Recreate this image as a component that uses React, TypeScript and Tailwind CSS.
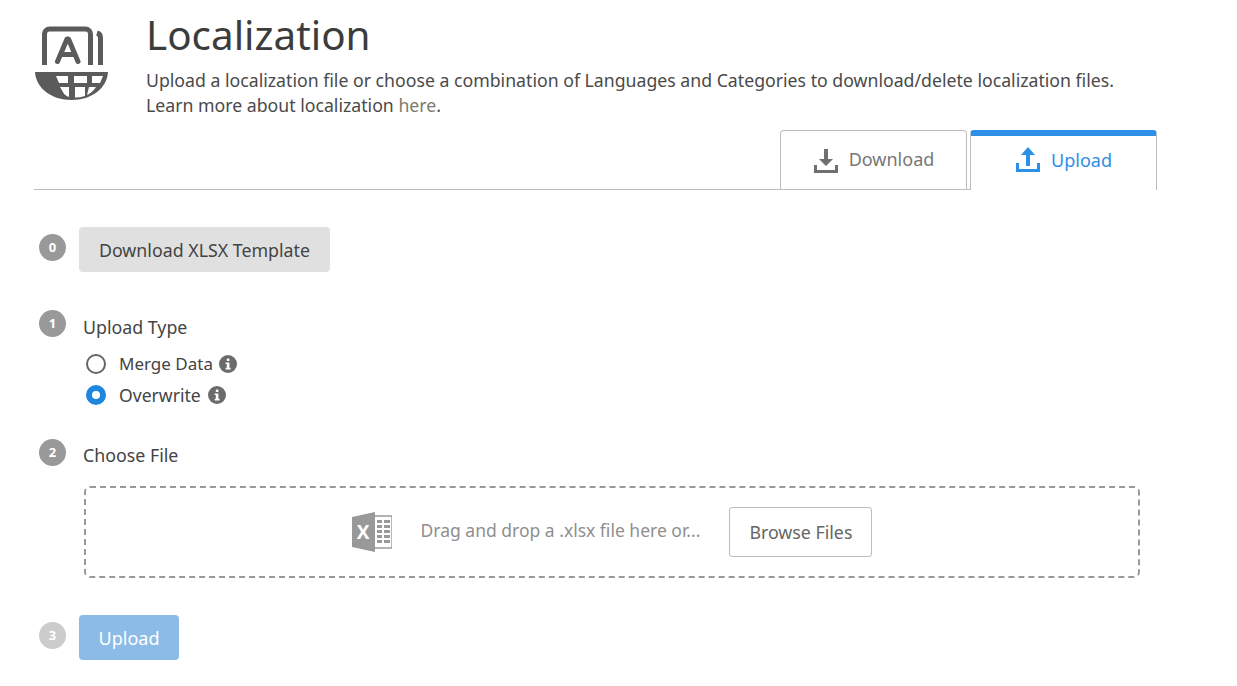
import React from 'react';

const StepBadge: React.FC<{ n: number; light?: boolean; className?: string }> = ({ n, light, className }) => (
  <div className={`flex h-[27px] w-[27px] shrink-0 items-center justify-center rounded-full text-[13px] font-bold text-white ${light ? 'bg-[#cccccc]' : 'bg-[#999999]'} ${className ?? ''}`}>
    {n}
  </div>
);

const InfoDot = () => (
  <svg viewBox="0 0 18 18" className="h-[18px] w-[18px]">
    <circle cx="9" cy="9" r="9" fill="#6b6b6b" />
    <rect x="7.8" y="3.4" width="2.6" height="2.6" rx="0.6" fill="#fff" />
    <path d="M6.6 7.4h3.8v5.4h1.2v1.6H6.6v-1.6h1.2V9H6.6z" fill="#fff" />
  </svg>
);

const LocalizationIcon = () => (
  <svg viewBox="0 0 76 80" className="h-[80px] w-[76px]">
    <g fill="none" stroke="#5b5b5b" strokeWidth="5">
      <path d="M10.500 43V12a5 5 0 0 1 5-5h36a5 5 0 0 1 5 5v31" />
      <path d="M63 11a5 5 0 0 1 3.500 5v27" />
      <path d="M23.500 39.500L33 17h1.500L44 39.500M27.500 32.500h13" strokeLinecap="round" strokeLinejoin="round" />
    </g>
    <path d="M1 50h73c-1 16-16 28-36.500 28S2 66 1 50z" fill="#5b5b5b" />
    <path d="M22 54h12v7H25zM40 54h13v7H40zM58 54h11l-3 7h-8zM26 65h9v10q-5-2-6-5zM41 65h10v9q-5 1.500-10 1.500zM55 65h7q-3 5-9 8z" fill="#fff" />
  </svg>
);

const DownloadGlyph = () => (
  <svg viewBox="0 0 26 26" className="mt-[3px] h-[26px] w-[26px]">
    <path d="M11 1h4v10h5l-7 7-7-7h5z" fill="#6f6f6f" />
    <path d="M1 17h3v5h18v-5h3v8H1z" fill="#6f6f6f" />
  </svg>
);

const UploadGlyph = () => (
  <svg viewBox="0 0 26 26" className="-mt-[1px] h-[26px] w-[26px]">
    <path d="M13 0l7 8h-5v11h-4V8H6z" fill="#2b90e6" />
    <path d="M1 16h3v6h18v-6h3v9H1z" fill="#2b90e6" />
  </svg>
);

const ExcelGlyph = () => (
  <svg viewBox="0 0 40 40" className="h-[40px] w-[40px]">
    <path d="M0 5L23 0v40L0 35z" fill="#999" />
    <text x="11" y="27" textAnchor="middle" fontSize="19" fontWeight="700" fill="#fff" fontFamily="Open Sans, sans-serif">X</text>
    <path d="M23 4h17v32H23" fill="none" stroke="#999" strokeWidth="1.4" />
    <path d="M25 8h5v3h-5zM32 8h6v3h-6zM25 13h5v3h-5zM32 13h6v3h-6zM25 18h5v3h-5zM32 18h6v3h-6zM25 23h5v3h-5zM32 23h6v3h-6zM25 28h5v3h-5zM32 28h6v3h-6z" fill="#999" />
  </svg>
);

const App: React.FC = () => {
  return (
    <div className="h-[686px] w-[1237px] overflow-hidden bg-white font-['Noto_Sans','Open_Sans',sans-serif] text-[#444444]">
      {/* header */}
      <div className="ml-[34px] flex h-[130px] items-start">
        <div className="pt-[22px]">
          <LocalizationIcon />
        </div>
        <div className="ml-[36px]">
          <h1 className="mt-[9px] text-[40.4px] leading-[52px] text-[#3c3c3c]">Localization</h1>
          <p className="mt-[7px] text-[17.7px] leading-[25px] text-[#4a4a4a]">
            Upload a localization file or choose a combination of Languages and Categories to download/delete localization files.
            <br />
            Learn more about localization <a className="text-[#7b7b6b]">here</a>.
          </p>
        </div>
      </div>

      {/* tabs */}
      <div className="ml-[34px] flex h-[60px] w-[1123px] items-stretch justify-end gap-[3px] border-b border-[#bdbdbd]">
        <div className="flex w-[187px] items-center justify-center gap-[10px] rounded-t-[4px] border border-b-0 border-[#bdbdbd] pb-[1px] text-[18px] text-[#777777]">
          <DownloadGlyph />
          Download
        </div>
        <div className="-mb-px flex w-[187px] items-center justify-center gap-[10px] rounded-t-[4px] border-x border-t-[6px] border-x-[#bdbdbd] border-t-[#2b90e6] bg-white pb-[5px] text-[18px] text-[#2b90e6]">
          <UploadGlyph />
          Upload
        </div>
      </div>

      <div className="ml-[39px] pt-[37px]">
        {/* step 0 */}
        <div className="flex items-start gap-[13px]">
          <StepBadge n={0} className="mt-[7px]" />
          <button className="h-[45px] w-[251px] rounded-[4px] bg-[#e0e0e0] pt-[2px] text-[17.8px] text-[#444444]">Download XLSX Template</button>
        </div>

        {/* step 1 */}
        <div className="mt-[38px] flex items-start gap-[17px]">
          <StepBadge n={1} />
          <span className="mt-[4px] text-[17.8px] leading-[27px]">Upload Type</span>
        </div>
        <div className="ml-[47px] mt-[12px] flex flex-col gap-[9px]">
          <label className="flex h-[22px] items-center gap-[13px] text-[17px]">
            <span className="h-[20px] w-[20px] rounded-full border-2 border-[#666666]" />
            Merge Data
            <span className="-ml-[7px]"><InfoDot /></span>
          </label>
          <label className="flex h-[22px] items-center gap-[13px] text-[17.6px]">
            <span className="flex h-[20px] w-[20px] items-center justify-center rounded-full bg-[#1f86e0]">
              <span className="h-[8px] w-[8px] rounded-full bg-white" />
            </span>
            Overwrite
            <span className="-ml-[6px]"><InfoDot /></span>
          </label>
        </div>

        {/* step 2 */}
        <div className="mt-[33px] flex items-start gap-[17px]">
          <StepBadge n={2} />
          <span className="mt-[3px] text-[17.8px] leading-[27px]">Choose File</span>
        </div>
        <div className="ml-[45px] mt-[17px] flex h-[92px] w-[1056px] items-center justify-center rounded-[6px] border-2 border-dashed border-[#999999]">
          <div className="flex items-center">
            <ExcelGlyph />
            <span className="-mt-[3px] ml-[29px] text-[17.5px] text-[#8f8f8f]">Drag and drop a .xlsx file here or...</span>
            <button className="ml-[29px] h-[50px] w-[143px] rounded-[3px] border border-[#bdbdbd] text-[17.8px] text-[#666666]">Browse Files</button>
          </div>
        </div>

        {/* step 3 */}
        <div className="mt-[37px] flex items-start gap-[13px]">
          <StepBadge n={3} light className="mt-[7px]" />
          <button className="h-[45px] w-[100px] rounded-[4px] bg-[#8dbbe8] pt-[2px] text-[18px] text-white">Upload</button>
        </div>
      </div>
    </div>
  );
};

export default App;
